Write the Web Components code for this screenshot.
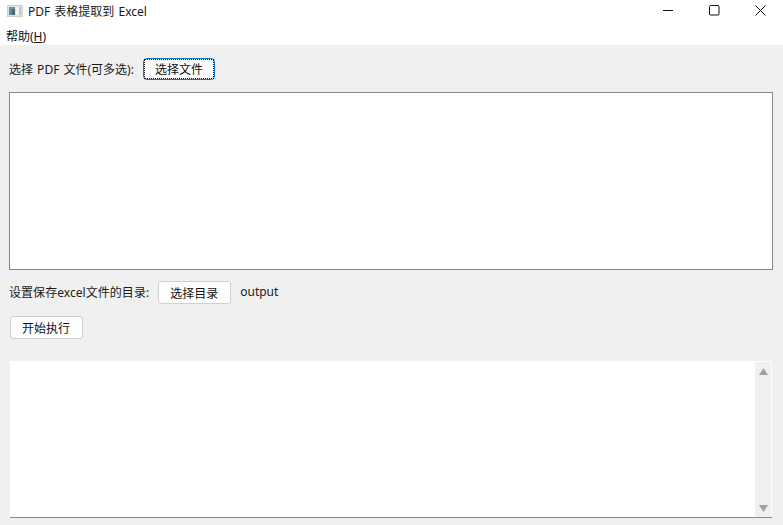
<!DOCTYPE html>
<html lang="zh"><head><meta charset="utf-8"><style>
html,body{margin:0;padding:0;background:#fff;overflow:hidden}
body{font:12px "Noto Sans","Noto Sans CJK SC",sans-serif;color:#111}
.up{padding-bottom:2px}
</style></head><body>
<app-window>
 <title-bar slot="title">PDF 表格提取到 Excel</title-bar>
 <menu-bar slot="menu"></menu-bar>
 <tool-row style="--top:12px;--gap:9px"><span style="word-spacing:1px">选择 PDF 文件(可多选):</span><tk-button focused>选择文件</tk-button></tool-row>
 <list-box></list-box>
 <tool-row style="--top:11px;--gap:9px"><span class="up" style="letter-spacing:.05px">设置保存excel文件的目录:</span><tk-button>选择目录</tk-button><span class="up">output</span></tool-row>
 <tool-row style="--top:12px;--gap:0;--left:1px"><tk-button>开始执行</tk-button></tool-row>
 <log-text></log-text>
</app-window>
<script>
function def(name, html){
  customElements.define(name, class extends HTMLElement{
    constructor(){super();this.attachShadow({mode:'open'}).innerHTML=html;}
  });
}
def('app-window',`<style>
:host{display:grid;grid-template-rows:25px 20px 480px;width:783px;height:525px;overflow:hidden}
.main{background:#f0f0f0;display:flex;flex-direction:column;box-sizing:border-box;padding:0 10px 0 9px}
</style><slot name="title"></slot><slot name="menu"></slot><div class="main"><slot></slot></div>`);
def('title-bar',`<style>
:host{display:flex;align-items:center;background:#fff;height:25px;box-sizing:border-box;padding-left:7px;font-size:12px;color:#1a1a1a}
svg{display:block;flex:none}
.t{margin-left:5px;flex:1;white-space:pre;word-spacing:1px;padding-bottom:3px}
.ctl{display:flex;flex:none}
.b{width:46px;height:25px;display:flex;align-items:center;justify-content:center;padding-bottom:4px;box-sizing:border-box}
</style>
<svg width="16" height="16" viewBox="0 0 16 16" style="margin-bottom:4px"><rect x=".5" y="2.5" width="15" height="11" fill="#dfe1e2" stroke="#cfcfcf"/><rect x="2" y="4" width="6" height="8" fill="#4f9a84"/><rect x="2" y="4" width="6" height="3" fill="#6f8fa3"/><rect x="5" y="6" width="3" height="6" fill="#4a6478"/><rect x="9" y="4" width="5" height="8" fill="#f2f3f3"/><rect x="12" y="4" width="2" height="8" fill="#c2c5c8"/></svg>
<span class="t"><slot></slot></span>
<div class="ctl">
<div class="b"><svg width="11" height="11" viewBox="0 0 11 11" style="margin-left:1px"><path d="M0 5.5H10" stroke="#111" fill="none"/></svg></div>
<div class="b"><svg width="11" height="11" viewBox="0 0 11 11"><rect x=".5" y=".5" width="9.5" height="9.5" rx="1" stroke="#111" fill="none"/></svg></div>
<div class="b"><svg width="11" height="11" viewBox="0 0 11 11"><path d="M.5 .5L10.5 10.5M10.5 .5L.5 10.5" stroke="#111" fill="none"/></svg></div>
</div>`);
def('menu-bar',`<style>
:host{display:flex;align-items:center;background:#fff;height:20px;padding-left:6px;font-size:12px;color:#111;box-sizing:border-box;padding-top:1px}
u{text-underline-offset:1px}
</style><span>帮助(<u>H</u>)</span>`);
def('tool-row',`<style>
:host{display:flex;align-items:center;height:23px;padding-top:var(--top,12px);padding-left:var(--left,0);gap:var(--gap,9px);font-size:12px;color:#1a1a1a;white-space:nowrap}
</style><slot></slot>`);
def('tk-button',`<style>
:host{display:inline-flex;box-sizing:border-box;width:73px;height:23px;padding-right:1px;align-items:center;justify-content:center;background:#fdfdfd;border:1px solid #d0d0d0;border-radius:3px;font-size:12px;color:#111;position:relative}
:host([focused]){border:1.5px solid #0a78d7;border-radius:4px;width:72px;height:22px;padding-right:0}
:host([focused])::after{content:"";position:absolute;inset:0;border:1px dotted #111}
</style><slot></slot>`);
def('list-box',`<style>
:host{display:block;box-sizing:border-box;height:178px;margin-top:12px;width:764px;background:#fff;border:1px solid #82878f}
</style>`);
def('log-text',`<style>
:host{display:flex;justify-content:flex-end;box-sizing:border-box;height:157px;margin:22px 0 0 1px;width:762px;background:#fff;border-bottom:1px solid #8a8a8a;padding:1px 1px 0 0}
.sb{width:16px;box-sizing:border-box;background:#f0f0f0;display:flex;flex-direction:column;justify-content:space-between;align-items:center;padding:6px 0 5px}
.sb svg{display:block}
</style><div class="sb"><svg width="9" height="7" viewBox="0 0 9 7"><path d="M4.5 0L9 7H0Z" fill="#a0a0a0"/></svg><svg width="9" height="7" viewBox="0 0 9 7"><path d="M0 0H9L4.5 7Z" fill="#a0a0a0"/></svg></div>`);
</script>
</body></html>
